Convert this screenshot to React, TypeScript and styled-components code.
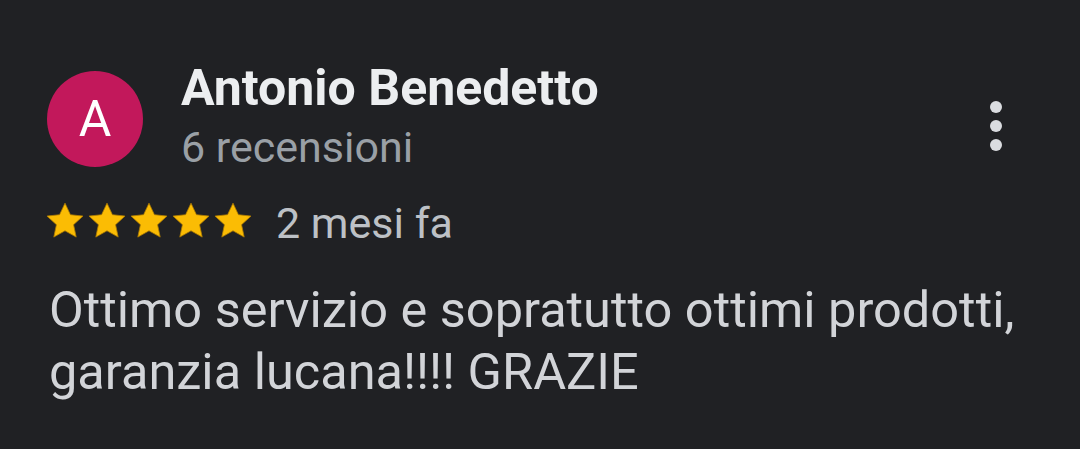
import styled, { createGlobalStyle } from "styled-components";

const GlobalStyle = createGlobalStyle`
  html, body {
    margin: 0;
    padding: 0;
    background: #202124;
  }
  body {
    font-family: Roboto, "Noto Sans", sans-serif;
  }
`;

const Page = styled.div`
  width: 1080px;
  height: 449px;
  background: #202124;
  box-sizing: border-box;
  padding: 60px 0 0 47px;
  overflow: hidden;
`;

const Header = styled.div`
  display: flex;
  align-items: flex-start;
`;

const Avatar = styled.div`
  width: 96px;
  height: 96px;
  border-radius: 50%;
  background: #c2185b;
  color: #fff;
  font-size: 50px;
  display: flex;
  align-items: center;
  justify-content: center;
  margin-top: 11px;
  flex-shrink: 0;
`;

const Author = styled.div`
  display: flex;
  flex-direction: column;
  margin-left: 38px;
  flex: 1;
`;

const Name = styled.div`
  color: #eceef0;
  font-size: 50px;
  font-weight: 700;
  line-height: 56px;
`;

const Count = styled.div`
  color: #9aa0a6;
  font-size: 43px;
  line-height: 50px;
  margin-top: 6px;
`;

const MoreButton = styled.button`
  background: none;
  border: none;
  padding: 0;
  margin: 41px 78px 0 0;
  display: flex;
  flex-direction: column;
  gap: 7px;
`;

const Dot = styled.span`
  width: 12px;
  height: 12px;
  border-radius: 50%;
  background: #dadce0;
`;

const RatingRow = styled.div`
  display: flex;
  align-items: flex-start;
  margin-top: 28px;
  gap: 22px;
`;

const Stars = styled.div`
  display: flex;
  margin-left: -3px;
`;

const When = styled.div`
  color: #bdc1c6;
  font-size: 43px;
  line-height: 46px;
`;

const Body = styled.p`
  margin: 33px 0 0 2px;
  color: #d2d4d8;
  font-size: 50.5px;
  line-height: 62px;
  white-space: nowrap;
`;

function Star() {
  return (
    <svg width="42" height="42" viewBox="0 0 24 24">
      <path
        d="M12 1.8l3.1 6.6 7.2.8-5.4 4.9 1.5 7.1L12 17.6l-6.4 3.6 1.5-7.1-5.4-4.9 7.2-.8z"
        fill="#fbbc04"
        stroke="#b07d00"
        strokeWidth="0.45"
        strokeLinejoin="round"
      />
    </svg>
  );
}

export default function App() {
  return (
    <Page>
      <GlobalStyle />
      <Header>
        <Avatar>A</Avatar>
        <Author>
          <Name>Antonio Benedetto</Name>
          <Count>6 recensioni</Count>
        </Author>
        <MoreButton aria-label="Altro">
          <Dot />
          <Dot />
          <Dot />
        </MoreButton>
      </Header>
      <RatingRow>
        <Stars>
          {[0, 1, 2, 3, 4].map(i => (
            <Star key={i} />
          ))}
        </Stars>
        <When>2 mesi fa</When>
      </RatingRow>
      <Body>
        Ottimo servizio e sopratutto ottimi prodotti,
        <br />
        garanzia lucana!!!! GRAZIE
      </Body>
    </Page>
  );
}
